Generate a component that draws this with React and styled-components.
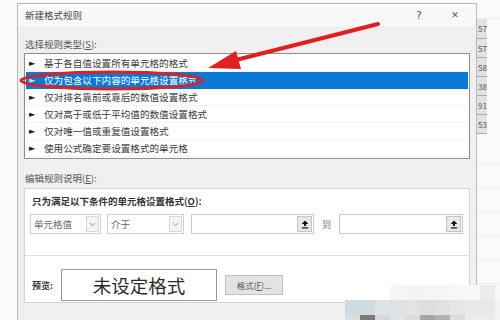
import React from "react";
import styled, { createGlobalStyle } from "styled-components";

const Global = createGlobalStyle`
  html, body { margin: 0; padding: 0; background: #ffffff; }
  body { font-family: "Noto Sans CJK SC", "Noto Sans", sans-serif; }
`;

const Screen = styled.div`
  position: relative;
  width: 500px;
  height: 320px;
  overflow: hidden;
  display: flex;
  background: #ffffff;
`;

const LeftGap = styled.div`
  width: 17px;
  flex: none;
  background: #fbfbfb;
`;

const Dialog = styled.div`
  width: 460px;
  flex: none;
  margin-top: 3px;
  height: 340px;
  box-sizing: border-box;
  border: 1px solid #b9b9b9;
  border-bottom: none;
  background: #f0f0f0;
  display: flex;
  flex-direction: column;
  box-shadow: 2px 0 2px rgba(0, 0, 0, 0.12);
`;

const TitleBar = styled.div`
  height: 22px;
  display: flex;
  align-items: center;
  padding: 0 0 0 7px;
  background: #f9f9f9;
  font-size: 9.5px;
  color: #474747;
`;

const Title = styled.span`
  flex: 1;
`;

const TitleButton = styled.span`
  width: ${(p) => p.$w}px;
  text-align: center;
  font-size: ${(p) => p.$size}px;
  color: #555;
  font-family: "DejaVu Sans", sans-serif;
`;

const Body = styled.div`
  padding: 0 6px;
  display: flex;
  flex-direction: column;
`;

const Label = styled.div`
  height: 14px;
  line-height: 14px;
  padding-left: 1px;
  margin-top: ${(p) => p.$mt}px;
  margin-bottom: ${(p) => p.$mb}px;
  font-size: 9.5px;
  color: #555;
  u { text-decoration: underline; }
`;

const List = styled.div`
  border: 1px solid #8e8e8e;
  background: #ffffff;
  padding: 1px 0;
  display: flex;
  flex-direction: column;
`;

const Row = styled.div`
  height: 17px;
  box-sizing: border-box;
  display: flex;
  align-items: center;
  padding-left: 3px;
  margin: 0 1px;
  font-size: 9.6px;
  color: ${(p) => (p.$selected ? "#ffffff" : "#3a3a3a")};
  background: ${(p) => (p.$selected ? "#0a78d6" : "#ffffff")};
  border-bottom: 1px solid ${(p) => (p.$selected ? "#0a78d6" : "#f3f3f3")};
`;

const Bullet = styled.span`
  font-size: 8.5px;
  width: 6px;
  margin-right: 9px;
  color: ${(p) => (p.$selected ? "#cfe3f7" : "#1a1a1a")};
  font-family: "DejaVu Sans", sans-serif;
`;

const Panel = styled.div`
  height: 115px;
  box-sizing: border-box;
  border: 1px solid #d4d4d4;
  background: #ffffff;
  display: flex;
  flex-direction: column;
`;

const Upper = styled.div`
  height: 61px;
  padding: 5px 0 0 5px;
  display: flex;
  flex-direction: column;
  gap: 6px;
`;

const BoldLine = styled.div`
  height: 14px;
  line-height: 14px;
  padding-left: 2px;
  font-size: 9.5px;
  font-weight: 700;
  color: #333;
`;

const Controls = styled.div`
  display: flex;
  align-items: center;
  height: 20px;
`;

const Combo = styled.div`
  width: ${(p) => p.$w}px;
  height: 20px;
  box-sizing: border-box;
  margin-right: ${(p) => p.$mr}px;
  border: 1px solid #d0d0d0;
  display: flex;
  align-items: center;
  padding: 1px;
  font-size: 9.5px;
  color: #6a6a6a;
`;

const ComboText = styled.span`
  flex: 1;
  padding-left: 2px;
`;

const DropBox = styled.span`
  width: 13px;
  height: 16px;
  box-sizing: border-box;
  border: 1px solid #d8d8d8;
  background: #f4f4f4;
  display: flex;
  align-items: center;
  justify-content: center;
`;

const Input = styled.div`
  width: ${(p) => p.$w}px;
  height: 20px;
  box-sizing: border-box;
  border: 1px solid #c9c9c9;
  display: flex;
  justify-content: flex-end;
  align-items: center;
  padding: 1px;
`;

const PickBtn = styled.span`
  width: 15px;
  height: 16px;
  box-sizing: border-box;
  border: 1px solid #c4c4c4;
  background: #e9e9e9;
  display: flex;
  align-items: center;
  justify-content: center;
`;

const To = styled.span`
  width: 25px;
  text-align: center;
  font-size: 9px;
  color: #777;
`;

const Lower = styled.div`
  flex: 1;
  border-top: 1px solid #dedede;
  display: flex;
  align-items: center;
  padding: 12px 0 0 7px;
`;

const PreviewLabel = styled.span`
  font-size: 9px;
  font-weight: 700;
  color: #3a3a3a;
  width: 29px;
`;

const PreviewBox = styled.div`
  width: 156px;
  height: 32px;
  box-sizing: border-box;
  border: 1px solid #9a9a9a;
  display: flex;
  align-items: center;
  justify-content: center;
  font-size: 18.5px;
  color: #2a2a2a;
  margin-right: 8px;
`;

const FormatBtn = styled.div`
  width: 58px;
  height: 20px;
  box-sizing: border-box;
  border: 1px solid #c2c2c2;
  background: #e3e3e3;
  display: flex;
  align-items: center;
  justify-content: center;
  font-size: 8.5px;
  color: #555;
  u { text-decoration: underline; }
`;

const Sheet = styled.div`
  flex: 1;
  display: flex;
  flex-direction: column;
  background: #fafafa;
`;

const Cell = styled.div`
  height: ${(p) => p.$h}px;
  box-sizing: border-box;
  border-bottom: 1px solid ${(p) => (p.$grey ? "#a9a9a9" : "#ececec")};
  background: ${(p) => (p.$grey ? "#e2e2e2" : "transparent")};
  font-size: 8px;
  color: #555;
  line-height: ${(p) => p.$h}px;
  overflow: hidden;
  white-space: nowrap;
  padding-left: 1px;
  width: ${(p) => (p.$grey ? "10px" : "100%")};
`;

const Overlay = styled.svg`
  position: absolute;
  left: 0;
  top: 0;
  pointer-events: none;
`;

const Mosaic = styled.div`
  position: absolute;
  left: 345px;
  top: 285px;
  display: grid;
  grid-template-columns: repeat(10, 15px) 5px;
  grid-auto-rows: 15px;
`;

const Tile = styled.div`
  background: ${(p) => p.$c};
`;

const Chevron = () => (
  <svg width="7" height="5" viewBox="0 0 7 5">
    <path d="M0.8 1 L3.5 3.8 L6.2 1" fill="none" stroke="#9a9a9a" strokeWidth="1" />
  </svg>
);

const UpIcon = () => (
  <svg width="8" height="9" viewBox="0 0 8 9">
    <path d="M4 0.5 L7.3 4 L5 4 L5 6 L3 6 L3 4 L0.7 4 Z" fill="#111" />
    <rect x="0.8" y="7.3" width="6.4" height="1.2" fill="#111" />
  </svg>
);

const rules = [
  "基于各自值设置所有单元格的格式",
  "仅为包含以下内容的单元格设置格式",
  "仅对排名靠前或靠后的数值设置格式",
  "仅对高于或低于平均值的数值设置格式",
  "仅对唯一值或重复值设置格式",
  "使用公式确定要设置格式的单元格",
];

const sheetCells = [
  { h: 19, t: "", g: false },
  { h: 20, t: "57", g: true },
  { h: 19, t: "57", g: true },
  { h: 19, t: "58", g: true },
  { h: 19, t: "38", g: true },
  { h: 19, t: "91", g: true },
  { h: 19, t: "53", g: true },
  { h: 30, t: "", g: false },
  { h: 24, t: "", g: false },
  { h: 24, t: "", g: false },
  { h: 24, t: "", g: false },
  { h: 24, t: "", g: false },
  { h: 24, t: "", g: false },
];

const mosaic = [
  ["transparent", "transparent", "transparent", "#f6f6f6", "#f4f4f4", "#f5f5f5", "#f5f5f5", "#f7f7f7", "#f8f8f8", "#ececec", "#f7f7f7"],
  ["#cddbe2", "#cfdbe1", "#dde4e7", "#dce3e6", "#e3e3e3", "#dedede", "#e1e1e1", "#e6e6e6", "#e9e9e9", "#e9e9e9", "#f3f3f3"],
  ["#dddddd", "#7a7a7a", "#d8d8d8", "#dfe4e6", "#dddddd", "#aaa39f", "#b5b0ae", "#dcdcdc", "#ececec", "#ececec", "#f3f3f3"],
];

export default function App() {
  return (
    <>
      <Global />
      <Screen>
        <LeftGap />
        <Dialog>
          <TitleBar>
            <Title>新建格式规则</Title>
            <TitleButton $w={14} $size={11}>?</TitleButton>
            <TitleButton $w={22} $size={9} style={{ marginLeft: 18, marginRight: 10 }}>✕</TitleButton>
          </TitleBar>
          <Body>
            <Label $mt={11} $mb={2}>
              选择规则类型(<u>S</u>):
            </Label>
            <List>
              {rules.map((r, i) => (
                <Row key={r} $selected={i === 1}>
                  <Bullet $selected={i === 1}>►</Bullet>
                  {r}
                </Row>
              ))}
            </List>
            <Label $mt={12} $mb={3}>
              编辑规则说明(<u>E</u>):
            </Label>
            <Panel>
              <Upper>
                <BoldLine>
                  只为满足以下条件的单元格设置格式(<u>O</u>):
                </BoldLine>
                <Controls>
                  <Combo $w={71} $mr={6}>
                    <ComboText>单元格值</ComboText>
                    <DropBox>
                      <Chevron />
                    </DropBox>
                  </Combo>
                  <Combo $w={77} $mr={7}>
                    <ComboText>介于</ComboText>
                    <DropBox>
                      <Chevron />
                    </DropBox>
                  </Combo>
                  <Input $w={123}>
                    <PickBtn>
                      <UpIcon />
                    </PickBtn>
                  </Input>
                  <To>到</To>
                  <Input $w={124}>
                    <PickBtn>
                      <UpIcon />
                    </PickBtn>
                  </Input>
                </Controls>
              </Upper>
              <Lower>
                <PreviewLabel>预览:</PreviewLabel>
                <PreviewBox>未设定格式</PreviewBox>
                <FormatBtn>
                  格式(<u>F</u>)...
                </FormatBtn>
              </Lower>
            </Panel>
          </Body>
        </Dialog>
        <Sheet>
          {sheetCells.map((c, i) => (
            <Cell key={i} $h={c.h} $grey={c.g}>
              {c.t}
            </Cell>
          ))}
        </Sheet>
        <Mosaic>
          {mosaic.flat().map((c, i) => (
            <Tile key={i} $c={c} />
          ))}
        </Mosaic>
        <Overlay width="500" height="320" viewBox="0 0 500 320">
          <ellipse cx="112" cy="80.5" rx="91" ry="8.5" fill="none" stroke="#d8232a" strokeWidth="3" />
          <line x1="378" y1="24" x2="232" y2="61" stroke="#e02020" strokeWidth="4" strokeLinecap="round" />
          <polygon points="208,68 236,51 241,69" fill="#e02020" />
        </Overlay>
      </Screen>
    </>
  );
}
